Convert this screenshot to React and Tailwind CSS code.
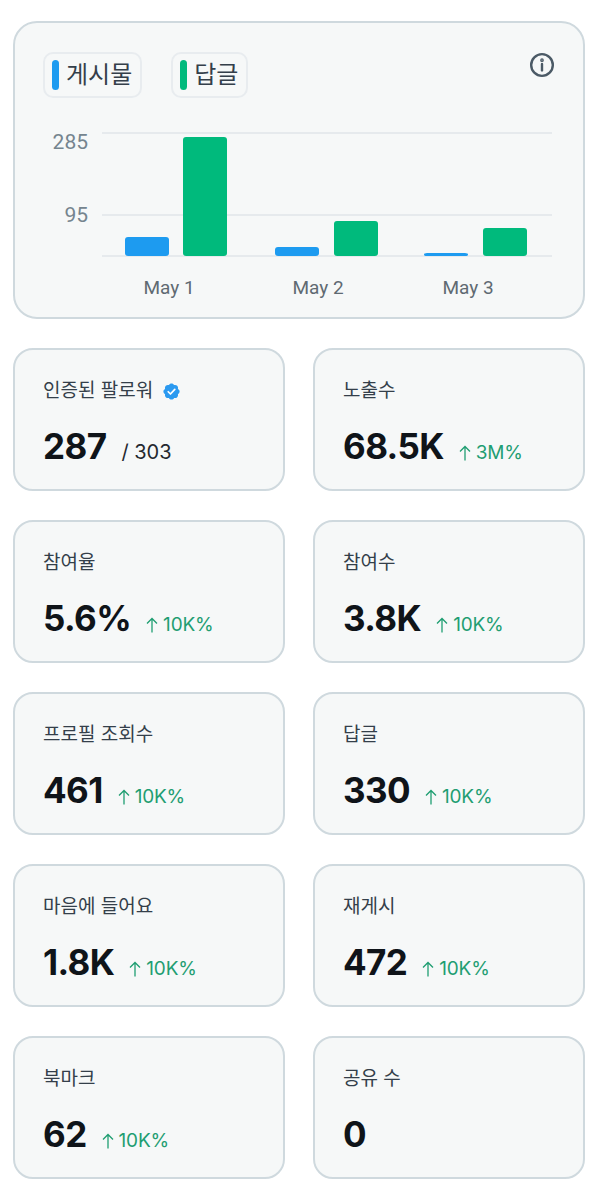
const sans = "font-['Liberation_Sans','Noto_Sans_CJK_KR',sans-serif]";

const stats = [
  { label: "인증된 팔로워", value: "287", total: "/ 303", verified: true },
  { label: "노출수", value: "68.5K", delta: "3M%" },
  { label: "참여율", value: "5.6%", delta: "10K%" },
  { label: "참여수", value: "3.8K", delta: "10K%" },
  { label: "프로필 조회수", value: "461", delta: "10K%" },
  { label: "답글", value: "330", delta: "10K%" },
  { label: "마음에 들어요", value: "1.8K", delta: "10K%" },
  { label: "재게시", value: "472", delta: "10K%" },
  { label: "북마크", value: "62", delta: "10K%" },
  { label: "공유 수", value: "0" },
];

const bars = [
  { x: 125, y: 237, fill: "#1d9bf0" },
  { x: 183, y: 137, fill: "#00ba7c" },
  { x: 275, y: 247, fill: "#1d9bf0" },
  { x: 334, y: 221, fill: "#00ba7c" },
  { x: 424, y: 253, fill: "#1d9bf0" },
  { x: 483, y: 228, fill: "#00ba7c" },
];

function VerifiedBadge() {
  return (
    <svg viewBox="0 0 22 22" className="h-[19px] w-[19px]">
      <path
        fill="#2b9af0"
        d="M20.4 11c0-1.3-.8-2.5-2-3 .4-1.300.1-2.700-.8-3.600-.9-.9-2.300-1.200-3.600-.8-.5-1.200-1.700-2-3-2s-2.500.8-3 2c-1.300-.4-2.700-.1-3.600.8-.9.9-1.200 2.300-.8 3.600-1.200.5-2 1.700-2 3s.8 2.500 2 3c-.4 1.300-.1 2.700.8 3.600.9.9 2.300 1.200 3.600.8.5 1.200 1.700 2 3 2s2.500-.8 3-2c1.300.4 2.700.1 3.600-.8.9-.9 1.200-2.300.8-3.600 1.200-.5 2-1.700 2-3z"
      />
      <path d="M7.200 11.300l2.600 2.600 5-5.300" fill="none" stroke="#fff" strokeWidth="2" strokeLinecap="round" strokeLinejoin="round" />
    </svg>
  );
}

function UpArrow() {
  return (
    <svg viewBox="0 0 12 16" className="mr-[5px] h-[16px] w-[12px] self-center" fill="none" stroke="#1f9e72" strokeWidth="1.300">
      <path d="M6 15.500V1.500M1 6.500l5-5 5 5" />
    </svg>
  );
}

function StatCard({ stat }) {
  return (
    <div className="flex h-[143px] flex-col rounded-[20px] border-2 border-[#cfd9de] bg-[#f6f8f8] pl-[28px] pt-[29px]">
      <div className="flex h-[24px] items-center gap-[9px] text-[19px] text-[#343f4a]">
        {stat.label}
        {stat.verified && <VerifiedBadge />}
      </div>
      <div className="mt-[21px] flex items-baseline font-['Inter','Liberation_Sans',sans-serif]">
        <span className="text-[35px] leading-[44px] font-bold tracking-[-0.6px] text-[#0f1419]">{stat.value}</span>
        {stat.total && <span className="ml-[15px] text-[20px] text-[#24292f]">{stat.total}</span>}
        {stat.delta && (
          <span className="ml-[15px] flex items-baseline text-[19px] tracking-[-0.2px] text-[#1f9e72]">
            <UpArrow />
            {stat.delta}
          </span>
        )}
      </div>
    </div>
  );
}

function Chart() {
  return (
    <svg width="572" height="298" viewBox="13 21 572 298" className="absolute -left-[2px] -top-[2px]">
      {[133, 215, 256].map((y) => (
        <line key={y} x1="102" x2="552" y1={y} y2={y} stroke="#e6eaed" strokeWidth="2" />
      ))}
      {bars.map((b) => (
        <rect key={b.x} x={b.x} y={b.y} width="44" height={256 - b.y} rx="3" fill={b.fill} />
      ))}
      <g fontSize="21" fontFamily="Roboto, sans-serif" fill="#75858f" textAnchor="end">
        <text x="88" y="149">285</text>
        <text x="88" y="222">95</text>
      </g>
      <g fontSize="19" fontFamily="Roboto, sans-serif" fill="#5f6a72" textAnchor="middle">
        <text x="169" y="294">May 1</text>
        <text x="318" y="294">May 2</text>
        <text x="468" y="294">May 3</text>
      </g>
    </svg>
  );
}

export default function App() {
  return (
    <div className={`min-h-[1200px] bg-white pl-[13px] pr-[30px] pt-[21px] ${sans}`}>
      <div className="relative h-[298px] rounded-[24px] border-2 border-[#cfd9de] bg-[#f6f8f8]">
        <Chart />
        <div className="relative flex gap-[29px] pl-[28px] pt-[29px]">
          <div className="flex h-[46px] items-center gap-[7px] rounded-[10px] border-2 border-[#e8ecef] pl-[7px] pr-[8px] text-[24px] text-[#343f4a]">
            <span className="h-[30px] w-[7px] rounded-full bg-[#1d9bf0]" />
            게시물
          </div>
          <div className="flex h-[46px] items-center gap-[7px] rounded-[10px] border-2 border-[#e8ecef] pl-[7px] pr-[8px] text-[24px] text-[#343f4a]">
            <span className="h-[30px] w-[7px] rounded-full bg-[#00ba7c]" />
            답글
          </div>
        </div>
        <svg viewBox="0 0 24 24" className="absolute right-[28px] top-[29px] h-[26px] w-[26px]" fill="none" stroke="#4b5a66" strokeWidth="2.200" strokeLinecap="round">
          <circle cx="12" cy="12" r="10" />
          <path d="M12 11v6" />
          <circle cx="12" cy="7.500" r="0.600" fill="#4b5a66" />
        </svg>
      </div>
      <div className="mt-[29px] grid grid-cols-2 gap-x-[28px] gap-y-[29px]">
        {stats.map((s) => (
          <StatCard key={s.label} stat={s} />
        ))}
      </div>
    </div>
  );
}
